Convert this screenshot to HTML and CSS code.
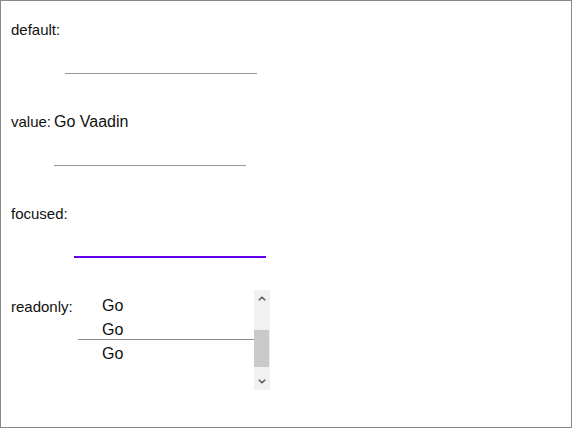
FILE: index.html
```html
<!DOCTYPE html>
<html>
<head>
<meta charset="utf-8">
<link rel="stylesheet" href="styles.css">
</head>
<body>
<div class="page">
  <div class="row">
    <span class="label label-default">default:</span>
    <div class="field"><div class="text"></div></div>
  </div>
  <div class="row">
    <span class="label label-value">value:</span>
    <div class="field"><div class="text">Go Vaadin</div></div>
  </div>
  <div class="row">
    <span class="label label-focused">focused:</span>
    <div class="field focused"><div class="text"></div></div>
  </div>
  <div class="row row-readonly">
    <span class="label label-readonly">readonly:</span>
    <div class="field readonly">
      <div class="list">
        <div class="item">Go</div>
        <div class="item">Go</div>
        <div class="item">Go</div>
      </div>
      <div class="scrollbar">
        <div class="sb-btn">
          <svg width="8" height="5" viewBox="0 0 8 5"><path d="M0.8 4.2 L4 1.2 L7.2 4.2" fill="none" stroke="#505050" stroke-width="1.4"/></svg>
        </div>
        <div class="sb-track"><div class="sb-thumb"></div></div>
        <div class="sb-btn">
          <svg width="8" height="5" viewBox="0 0 8 5"><path d="M0.8 0.8 L4 3.8 L7.2 0.8" fill="none" stroke="#505050" stroke-width="1.4"/></svg>
        </div>
      </div>
      <div class="divider"></div>
    </div>
  </div>
</div>
</body>
</html>
```

FILE: styles.css
```css
html, body {
  margin: 0;
  padding: 0;
  background: #fff;
}

.page {
  width: 572px;
  height: 428px;
  box-sizing: border-box;
  border: 1px solid #888;
  padding: 20px 0 0 10px;
  font-family: "Liberation Sans", Arial, sans-serif;
  font-size: 16px;
  line-height: 18px;
  color: #111;
}

.row {
  display: flex;
  align-items: flex-start;
  height: 92px;
}

.row-readonly {
  margin-top: 1px;
}

.label {
  flex: none;
  white-space: nowrap;
  font-size: 15px;
}

.label-default { width: 54px; }
.label-value { width: 43px; }
.label-focused { width: 63px; }
.label-readonly { width: 67px; }

.field {
  width: 192px;
}

.text {
  height: 18px;
  padding-bottom: 34px;
  border-bottom: 1px solid #999;
}

.focused .text {
  padding-bottom: 33px;
  border-bottom: 2px solid #6200ee;
}

.readonly {
  position: relative;
  display: flex;
  height: 100px;
  margin-top: -8px;
}

.list {
  flex: 1;
  padding-top: 4px;
}

.item {
  height: 24px;
  line-height: 24px;
  padding-left: 24px;
}

.divider {
  position: absolute;
  left: 0;
  right: 16px;
  top: 49px;
  height: 1px;
  background: #8c8c8c;
}

.scrollbar {
  width: 16px;
  display: flex;
  flex-direction: column;
  background: #f1f1f1;
}

.sb-btn {
  height: 17px;
  display: flex;
  align-items: center;
  justify-content: center;
}

.sb-btn svg {
  display: block;
}

.sb-track {
  flex: 1;
}

.sb-thumb {
  margin-top: 23px;
  width: 15px;
  height: 37px;
  background: #c9c9c9;
}
```
